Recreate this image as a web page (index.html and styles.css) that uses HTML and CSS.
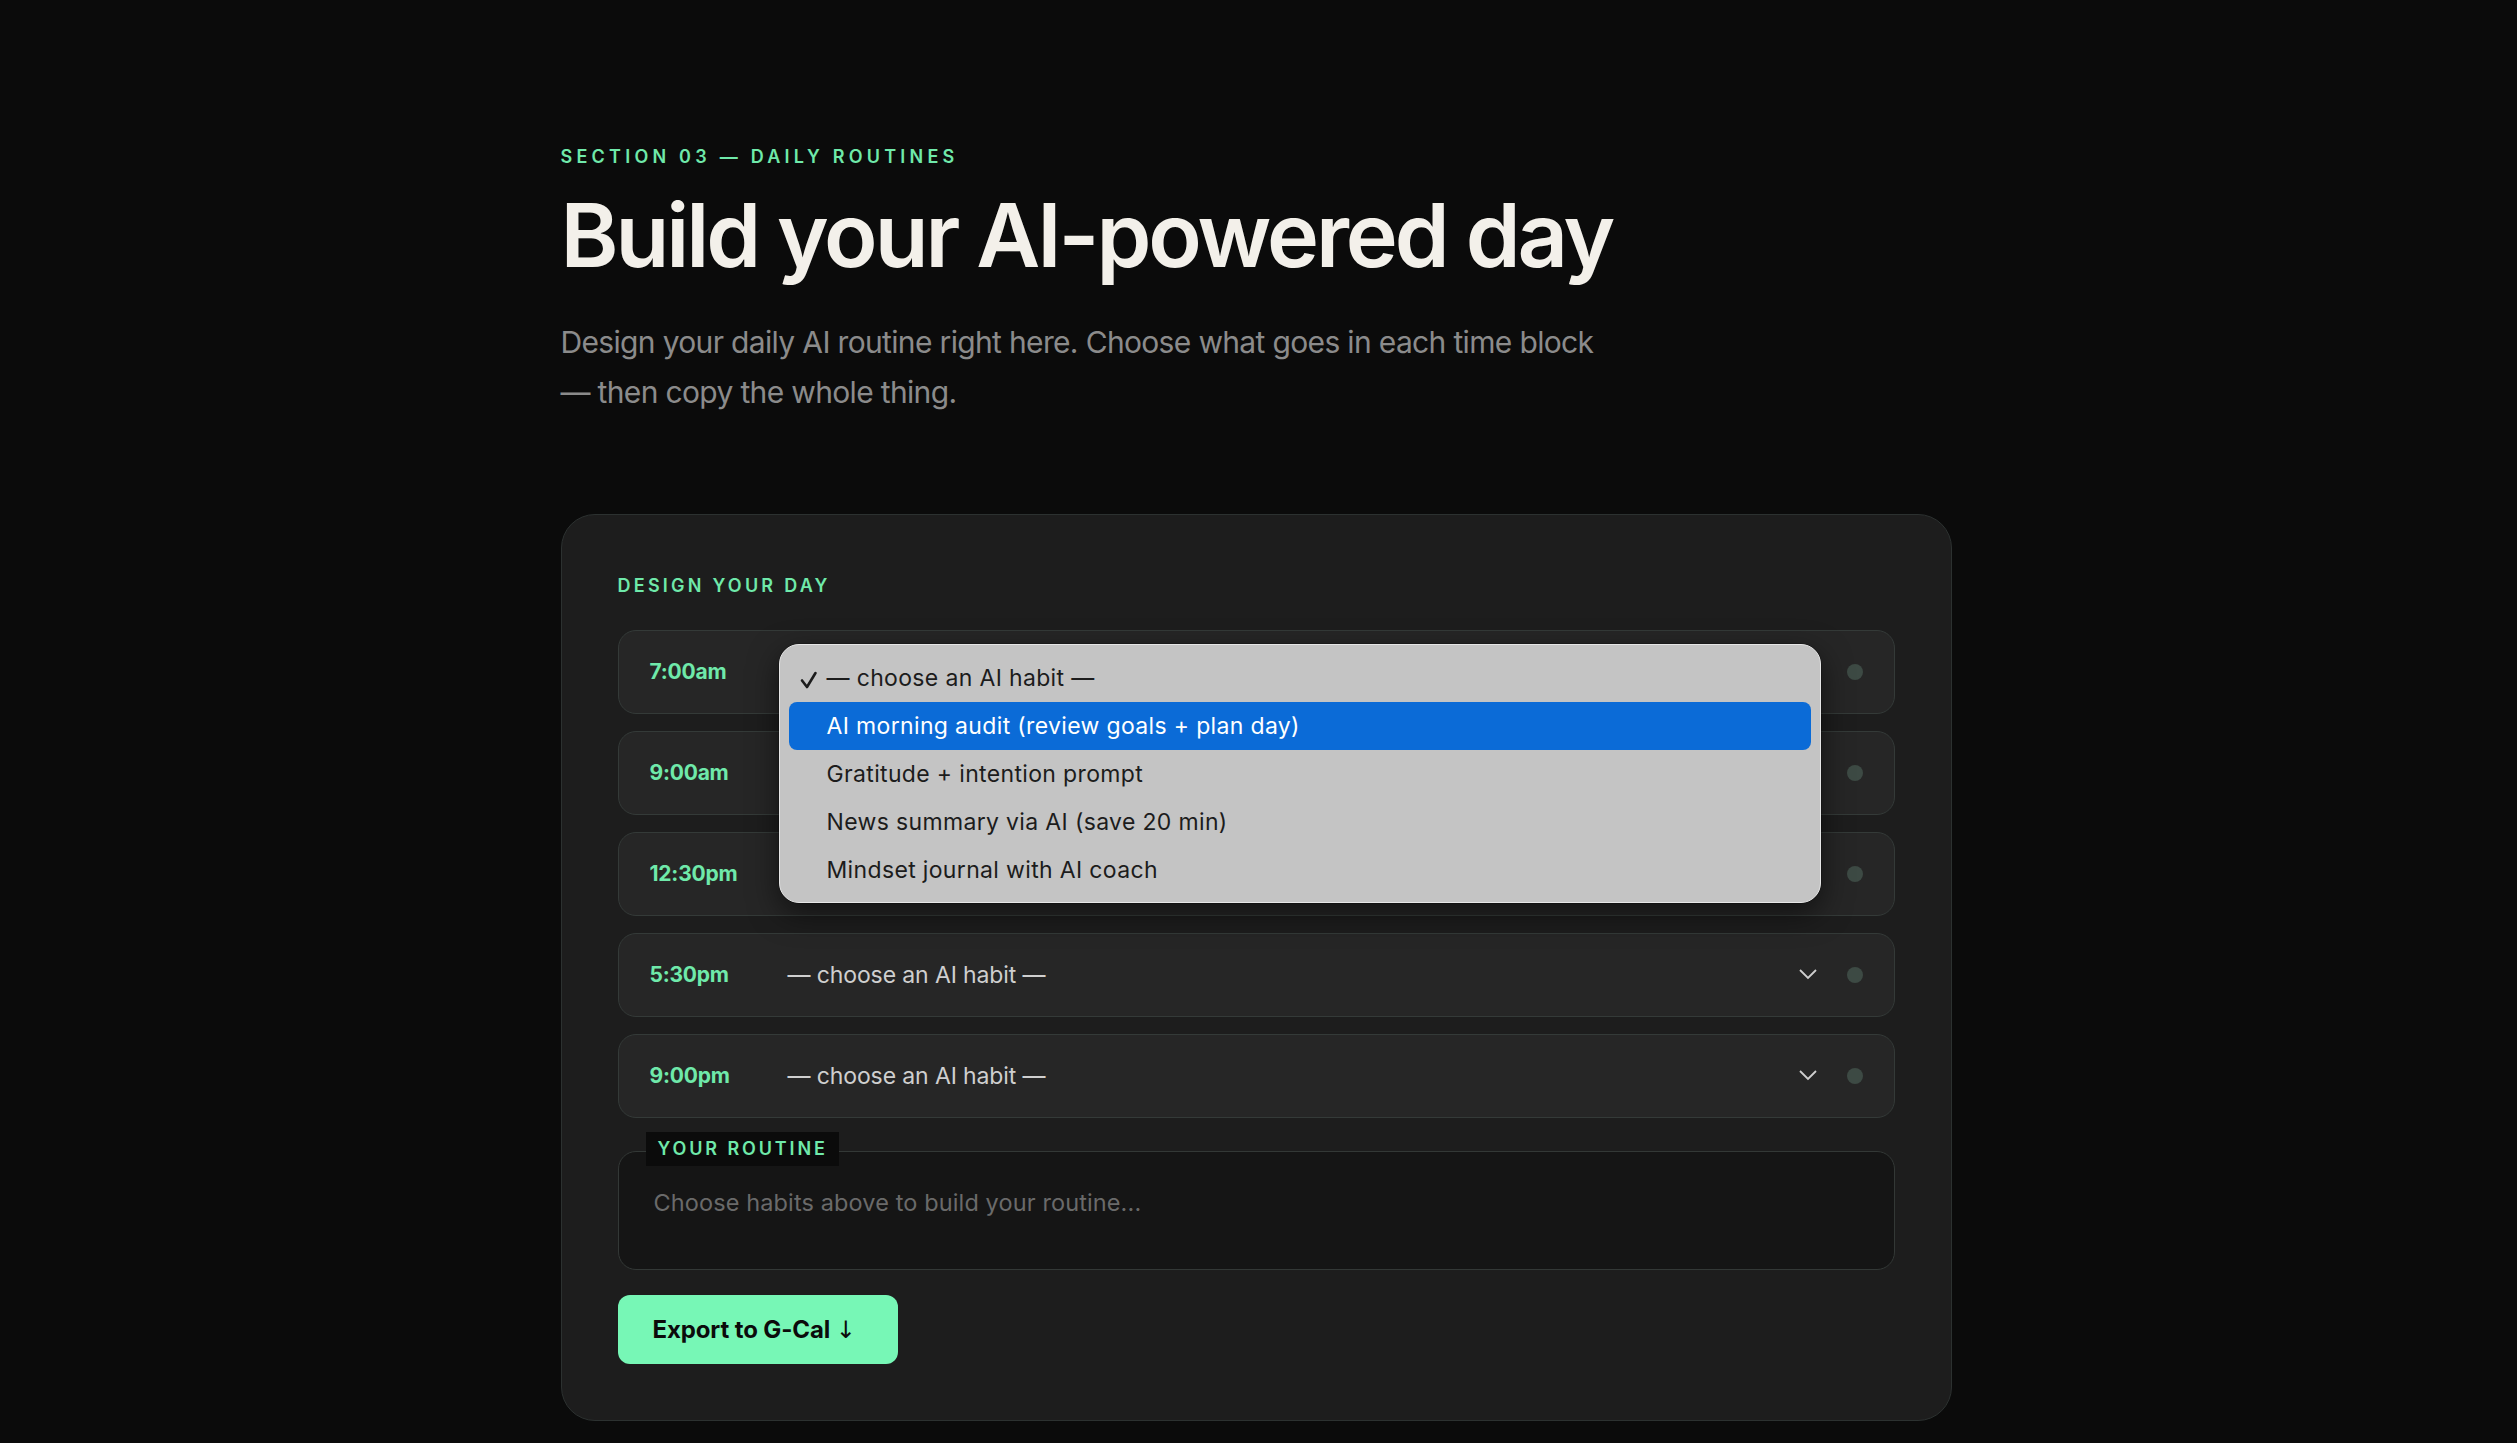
FILE: index.html
```html
<!DOCTYPE html>
<html lang="en">
<head>
<meta charset="utf-8">
<title>Build your AI-powered day</title>
<link rel="stylesheet" href="styles.css">
</head>
<body>
<main class="page">
  <header class="intro">
    <p class="eyebrow">SECTION 03 — DAILY ROUTINES</p>
    <h1 class="title">Build your AI-powered day</h1>
    <p class="lede">Design your daily AI routine right here. Choose what goes in each time block — then copy the whole thing.</p>
  </header>

  <section class="card">
    <h2 class="card-label">DESIGN YOUR DAY</h2>
    <div class="rows">
      <div class="row row-open">
        <span class="time">7:00am</span>
        <div class="select select-covered"><span class="select-text">— choose an AI habit —</span>
          <svg class="chev" width="18" height="11" viewBox="0 0 18 11"><polyline points="1,1 9,9 17,1" fill="none" stroke="#cfcfcf" stroke-width="1.8"/></svg>
        </div>
        <span class="dot"></span>
        <div class="popup">
          <div class="opt opt-checked">
            <svg class="check" width="20" height="20" viewBox="0 0 20 20"><path d="M3 10.5 L8 17 L16.5 3" fill="none" stroke="#1c1c1c" stroke-width="2.6" stroke-linecap="round" stroke-linejoin="round"/></svg>
            <span>— choose an AI habit —</span>
          </div>
          <div class="opt opt-active"><span>AI morning audit (review goals + plan day)</span></div>
          <div class="opt"><span>Gratitude + intention prompt</span></div>
          <div class="opt"><span>News summary via AI (save 20 min)</span></div>
          <div class="opt"><span>Mindset journal with AI coach</span></div>
        </div>
      </div>
      <div class="row">
        <span class="time">9:00am</span>
        <div class="select select-covered"><span class="select-text">— choose an AI habit —</span>
          <svg class="chev" width="18" height="11" viewBox="0 0 18 11"><polyline points="1,1 9,9 17,1" fill="none" stroke="#cfcfcf" stroke-width="1.8"/></svg>
        </div>
        <span class="dot"></span>
      </div>
      <div class="row">
        <span class="time">12:30pm</span>
        <div class="select select-covered"><span class="select-text">— choose an AI habit —</span>
          <svg class="chev" width="18" height="11" viewBox="0 0 18 11"><polyline points="1,1 9,9 17,1" fill="none" stroke="#cfcfcf" stroke-width="1.8"/></svg>
        </div>
        <span class="dot"></span>
      </div>
      <div class="row">
        <span class="time">5:30pm</span>
        <div class="select"><span class="select-text">— choose an AI habit —</span>
          <svg class="chev" width="18" height="11" viewBox="0 0 18 11"><polyline points="1,1 9,9 17,1" fill="none" stroke="#cfcfcf" stroke-width="1.8"/></svg>
        </div>
        <span class="dot"></span>
      </div>
      <div class="row">
        <span class="time">9:00pm</span>
        <div class="select"><span class="select-text">— choose an AI habit —</span>
          <svg class="chev" width="18" height="11" viewBox="0 0 18 11"><polyline points="1,1 9,9 17,1" fill="none" stroke="#cfcfcf" stroke-width="1.8"/></svg>
        </div>
        <span class="dot"></span>
      </div>
    </div>

    <div class="routine">
      <span class="routine-label">YOUR ROUTINE</span>
      <p class="routine-text">Choose habits above to build your routine...</p>
    </div>

    <button class="export" type="button">Export to G-Cal <span class="arrow">↓</span></button>
  </section>
</main>
</body>
</html>
```

FILE: styles.css
```css
* { box-sizing: border-box; }

html, body {
  margin: 0;
  padding: 0;
  background: #0b0b0b;
}

body {
  font-family: Inter, "Noto Sans", "Liberation Sans", sans-serif;
  color: #f2efe9;
  min-height: 1443px;
}

.page {
  width: 1392px;
  margin: 0 auto;
  padding-top: 146px;
  position: relative;
  left: -2px;
}

.eyebrow {
  margin: 0;
  font-size: 18px;
  line-height: 21.6px;
  font-weight: 600;
  letter-spacing: 0.235em;
  color: #6fe9aa;
}

.title {
  margin: 19px 0 0;
  font-size: 88px;
  line-height: 96.8px;
  font-weight: 600;
  letter-spacing: -0.035em;
  color: #f3f0ea;
}

.lede {
  margin: 34px 0 0;
  max-width: 1045px;
  font-size: 30px;
  line-height: 50px;
  font-weight: 400;
  color: #8b8b8b;
  letter-spacing: -0.022em;
}

.card {
  margin-top: 97px;
  width: 1391px;
  background: #1d1d1d;
  border: 1px solid #2c3130;
  border-radius: 34px;
  padding: 60px 56px 56px;
}

.card-label {
  margin: 0;
  font-size: 18px;
  line-height: 21.6px;
  font-weight: 600;
  letter-spacing: 0.18em;
  color: #6fe9aa;
}

.rows {
  margin-top: 33px;
  display: flex;
  flex-direction: column;
  gap: 17px;
}

.row {
  position: relative;
  height: 84px;
  display: flex;
  align-items: center;
  background: #262626;
  border: 1px solid #343a38;
  border-radius: 18px;
  padding: 0 31px 0 31px;
}

.time {
  width: 130px;
  flex: none;
  font-size: 21px;
  font-weight: 700;
  color: #6fe9aa;
  letter-spacing: -0.01em;
}

.select {
  flex: 1;
  display: flex;
  align-items: center;
  justify-content: space-between;
  padding-left: 8px;
  padding-right: 0;
}

.select-covered { visibility: hidden; }

.select-text {
  font-size: 23px;
  color: #cfcfcf;
  letter-spacing: -0.005em;
}

.chev { display: block; }

.dot {
  flex: none;
  width: 16px;
  height: 16px;
  margin-left: 30px;
  border-radius: 50%;
  background: #3d4a44;
}

.popup {
  position: absolute;
  left: 160px;
  top: 13px;
  width: 1042px;
  height: 259px;
  z-index: 5;
  background: #c4c4c4;
  border: 1.5px solid #e6e6e6;
  border-radius: 20px;
  padding: 9px 9px;
  box-shadow: 0 10px 30px rgba(0,0,0,0.55), 0 0 0 0.5px rgba(0,0,0,0.4);
}

.opt {
  position: relative;
  height: 48px;
  display: flex;
  align-items: center;
  padding-left: 38px;
  font-size: 23px;
  color: #1c1c1c;
  border-radius: 8px;
  letter-spacing: 0.015em;
}

.check {
  position: absolute;
  left: 10px;
  top: 16px;
}

.opt-active {
  background: #0b6bd7;
  color: #ffffff;
}

.routine {
  position: relative;
  margin-top: 33px;
  height: 119px;
  background: #151515;
  border: 1px solid #333836;
  border-radius: 18px;
  padding: 35px 35px 0;
}

.routine-label {
  position: absolute;
  left: 27px;
  top: -20px;
  height: 34px;
  display: flex;
  align-items: center;
  padding: 0 11px 0 12px;
  background: #0b0b0b;
  font-size: 18px;
  font-weight: 600;
  letter-spacing: 0.16em;
  color: #6fe9aa;
}

.routine-text {
  margin: 0;
  font-size: 23.5px;
  line-height: 32px;
  color: #6a6a6a;
  letter-spacing: 0.005em;
}

.export {
  margin-top: 25px;
  display: block;
  width: 280px;
  height: 69px;
  border: 0;
  border-radius: 12px;
  background: #77f7b6;
  color: #0b0b0b;
  font-family: Inter, "Noto Sans", "Liberation Sans", sans-serif;
  font-size: 24px;
  font-weight: 700;
  letter-spacing: -0.005em;
  padding: 0 0 0 35px;
  text-align: left;
}

.arrow {
  font-family: "DejaVu Sans", sans-serif;
  font-weight: 400;
  font-size: 24px;
}
```
